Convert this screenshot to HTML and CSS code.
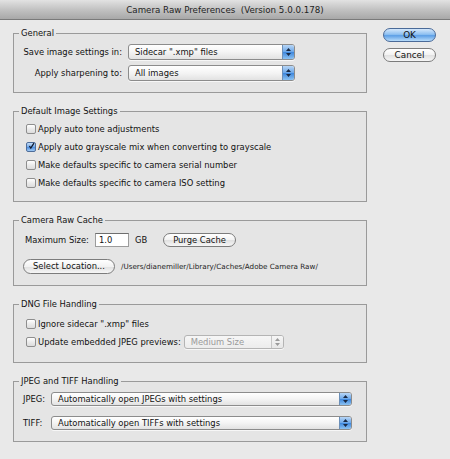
FILE: index.html
```html
<!DOCTYPE html>
<html lang="en">
<head>
<meta charset="utf-8">
<title>Camera Raw Preferences</title>
<link rel="stylesheet" href="styles.css">
</head>
<body>
<div class="window">
  <div class="titlebar">Camera Raw Preferences&nbsp; (Version 5.0.0.178)</div>
  <div class="content">
    <div class="groups">
      <fieldset class="group general">
        <legend>General</legend>
        <div class="form-grid">
          <span class="label">Save image settings in:</span>
          <div class="select">
            <span class="select-text">Sidecar ".xmp" files</span>
            <span class="select-arrows"><svg width="7" height="10" viewBox="0 0 7 10"><path d="M1 4 L3.5 1 L6 4 Z M1 6 L3.5 9 L6 6 Z" fill="#1a2a44"/></svg></span>
          </div>
          <span class="label">Apply sharpening to:</span>
          <div class="select">
            <span class="select-text">All images</span>
            <span class="select-arrows"><svg width="7" height="10" viewBox="0 0 7 10"><path d="M1 4 L3.5 1 L6 4 Z M1 6 L3.5 9 L6 6 Z" fill="#1a2a44"/></svg></span>
          </div>
        </div>
      </fieldset>

      <fieldset class="group defaults">
        <legend>Default Image Settings</legend>
        <div class="check-row"><span class="checkbox"></span>Apply auto tone adjustments</div>
        <div class="check-row"><span class="checkbox checked"><svg width="10" height="10" viewBox="0 0 10 10"><path d="M2 5 L4 8 L8.5 1" fill="none" stroke="#111a2e" stroke-width="1.8"/></svg></span>Apply auto grayscale mix when converting to grayscale</div>
        <div class="check-row"><span class="checkbox"></span>Make defaults specific to camera serial number</div>
        <div class="check-row"><span class="checkbox"></span>Make defaults specific to camera ISO setting</div>
      </fieldset>

      <fieldset class="group cache">
        <legend>Camera Raw Cache</legend>
        <div class="cache-row">
          <span class="label-left">Maximum Size:</span>
          <span class="textfield">1.0</span>
          <span class="unit">GB</span>
          <span class="pill purge">Purge Cache</span>
        </div>
        <div class="cache-row second">
          <span class="pill locate">Select Location...</span>
          <span class="path">/Users/dianemiller/Library/Caches/Adobe Camera Raw/</span>
        </div>
      </fieldset>

      <fieldset class="group dng">
        <legend>DNG File Handling</legend>
        <div class="check-row"><span class="checkbox"></span>Ignore sidecar ".xmp" files</div>
        <div class="check-row"><span class="checkbox"></span>Update embedded JPEG previews:
          <div class="select disabled">
            <span class="select-text">Medium Size</span>
            <span class="select-arrows"><svg width="7" height="10" viewBox="0 0 7 10"><path d="M1 4 L3.5 1 L6 4 Z M1 6 L3.5 9 L6 6 Z" fill="#9a9a9a"/></svg></span>
          </div>
        </div>
      </fieldset>

      <fieldset class="group jpeg">
        <legend>JPEG and TIFF Handling</legend>
        <div class="jpeg-grid">
          <span class="label">JPEG:</span>
          <div class="select">
            <span class="select-text">Automatically open JPEGs with settings</span>
            <span class="select-arrows"><svg width="7" height="10" viewBox="0 0 7 10"><path d="M1 4 L3.5 1 L6 4 Z M1 6 L3.5 9 L6 6 Z" fill="#1a2a44"/></svg></span>
          </div>
          <span class="label">TIFF:</span>
          <div class="select">
            <span class="select-text">Automatically open TIFFs with settings</span>
            <span class="select-arrows"><svg width="7" height="10" viewBox="0 0 7 10"><path d="M1 4 L3.5 1 L6 4 Z M1 6 L3.5 9 L6 6 Z" fill="#1a2a44"/></svg></span>
          </div>
        </div>
      </fieldset>
    </div>

    <div class="actions">
      <span class="pill ok">OK</span>
      <span class="pill cancel">Cancel</span>
    </div>
  </div>
</div>
</body>
</html>
```

FILE: styles.css
```css
* { box-sizing: border-box; }

html, body {
  margin: 0;
  padding: 0;
  background: #e8e8e8;
}

body {
  font-family: "DejaVu Sans", "Liberation Sans", sans-serif;
  font-size: 8.4px;
  color: #111;
}

.window {
  width: 450px;
  height: 459px;
  overflow: hidden;
  background: #e9e9e9;
}

.titlebar {
  height: 20px;
  line-height: 20px;
  text-align: center;
  font-size: 8.7px;
  color: #1e1e1e;
  background: linear-gradient(#e2e2e2, #c2c2c2 50%, #a8a8a8);
  border-bottom: 1px solid #7a7a7a;
}

.content {
  display: flex;
  align-items: flex-start;
  padding: 7px 0 0 13px;
}

.groups {
  width: 354px;
  display: flex;
  flex-direction: column;
  gap: 12px;
}

.group {
  margin: 0;
  padding: 0 9px;
  border: 1px solid #9a9a9a;
  background: #e5e5e5;
  min-width: 0;
}

.group legend {
  padding: 0 2px;
  margin-left: -4px;
  line-height: 12px;
  color: #111;
}

/* General */
.general { padding-top: 5px; padding-bottom: 11px; }

.form-grid {
  display: grid;
  grid-template-columns: 99px 167px;
  column-gap: 6px;
  row-gap: 5px;
  align-items: center;
}

.form-grid .label { text-align: right; white-space: nowrap; }

.select {
  height: 16px;
  display: flex;
  align-items: center;
  border: 1px solid #8c8c8c;
  border-radius: 3px;
  background: linear-gradient(#ffffff, #f4f4f4 50%, #e2e2e2);
  box-shadow: 0 1px 0 rgba(255,255,255,0.7);
  overflow: hidden;
}

.select-text {
  flex: 1;
  padding-left: 6px;
  white-space: nowrap;
  color: #111;
}

.select-arrows {
  width: 12px;
  height: 100%;
  display: flex;
  align-items: center;
  justify-content: center;
  background: linear-gradient(#b8d6f6, #6aa6e8 50%, #3d86dc 51%, #8cc2f2);
  border-left: 1px solid #6b8fb8;
}

/* Default image settings */
.defaults { padding-top: 3px; padding-bottom: 9px; }

.check-row {
  height: 18px;
  display: flex;
  align-items: center;
  padding-left: 3px;
  white-space: nowrap;
}

.checkbox {
  width: 10px;
  height: 10px;
  flex: none;
  margin-right: 2px;
  border: 1px solid #8e8e8e;
  border-radius: 2px;
  background: linear-gradient(#ffffff, #ebebeb 50%, #dcdcdc);
  display: flex;
  align-items: center;
  justify-content: center;
}

.checkbox.checked {
  border-color: #4e6d99;
  background: linear-gradient(#c6def8, #6fa6e6 50%, #4a8ade 51%, #9fcaf4);
}

.checkbox svg { margin-top: -2px; margin-left: 1px; }

/* Cache */
.cache { padding-top: 6px; padding-bottom: 11px; }

.cache-row {
  height: 16px;
  display: flex;
  align-items: center;
  white-space: nowrap;
}

.cache-row.second { margin-top: 10px; }

.label-left { margin-left: 2px; width: 70px; }

.textfield {
  width: 34px;
  height: 14px;
  line-height: 13px;
  padding-left: 3px;
  background: #fff;
  border: 1px solid #9c9c9c;
  border-top-color: #6e6e6e;
}

.unit { margin-left: 6px; width: 28px; }

.pill {
  display: inline-flex;
  align-items: center;
  justify-content: center;
  height: 15px;
  border: 1px solid #7c7c7c;
  border-radius: 8px;
  background: linear-gradient(#ffffff, #f2f2f2 50%, #e0e0e0 51%, #f6f6f6);
  color: #111;
  white-space: nowrap;
}

.purge { width: 73px; height: 14px; }

.locate { width: 92px; }

.path {
  margin-left: 6px;
  font-size: 7.2px;
  color: #222;
}

/* DNG */
.dng { padding-top: 5px; padding-bottom: 11px; }

.select.disabled {
  width: 100px;
  height: 14px;
  margin-left: 3px;
  border-color: #b4b4b4;
  background: linear-gradient(#f6f6f6, #ececec);
}

.select.disabled .select-text { color: #9a9a9a; }

.select.disabled .select-arrows {
  background: linear-gradient(#f6f6f6, #e6e6e6);
  border-left: 1px solid #c6c6c6;
}

/* JPEG / TIFF */
.jpeg { padding-top: 5px; padding-bottom: 11px; }

.jpeg-grid {
  display: grid;
  grid-template-columns: 28px 301px;
  row-gap: 10px;
  align-items: center;
}

.jpeg-grid .select { height: 14px; }

/* Buttons */
.actions {
  display: flex;
  flex-direction: column;
  gap: 6px;
  margin-left: 16px;
  margin-top: 1px;
}

.actions .pill {
  width: 53px;
  height: 14px;
  font-size: 8.8px;
}

.ok {
  border-color: #4a6a98;
  background: linear-gradient(#d4e7fb, #8ec0f1 45%, #5d9fe6 55%, #b8dcfa);
}
```
